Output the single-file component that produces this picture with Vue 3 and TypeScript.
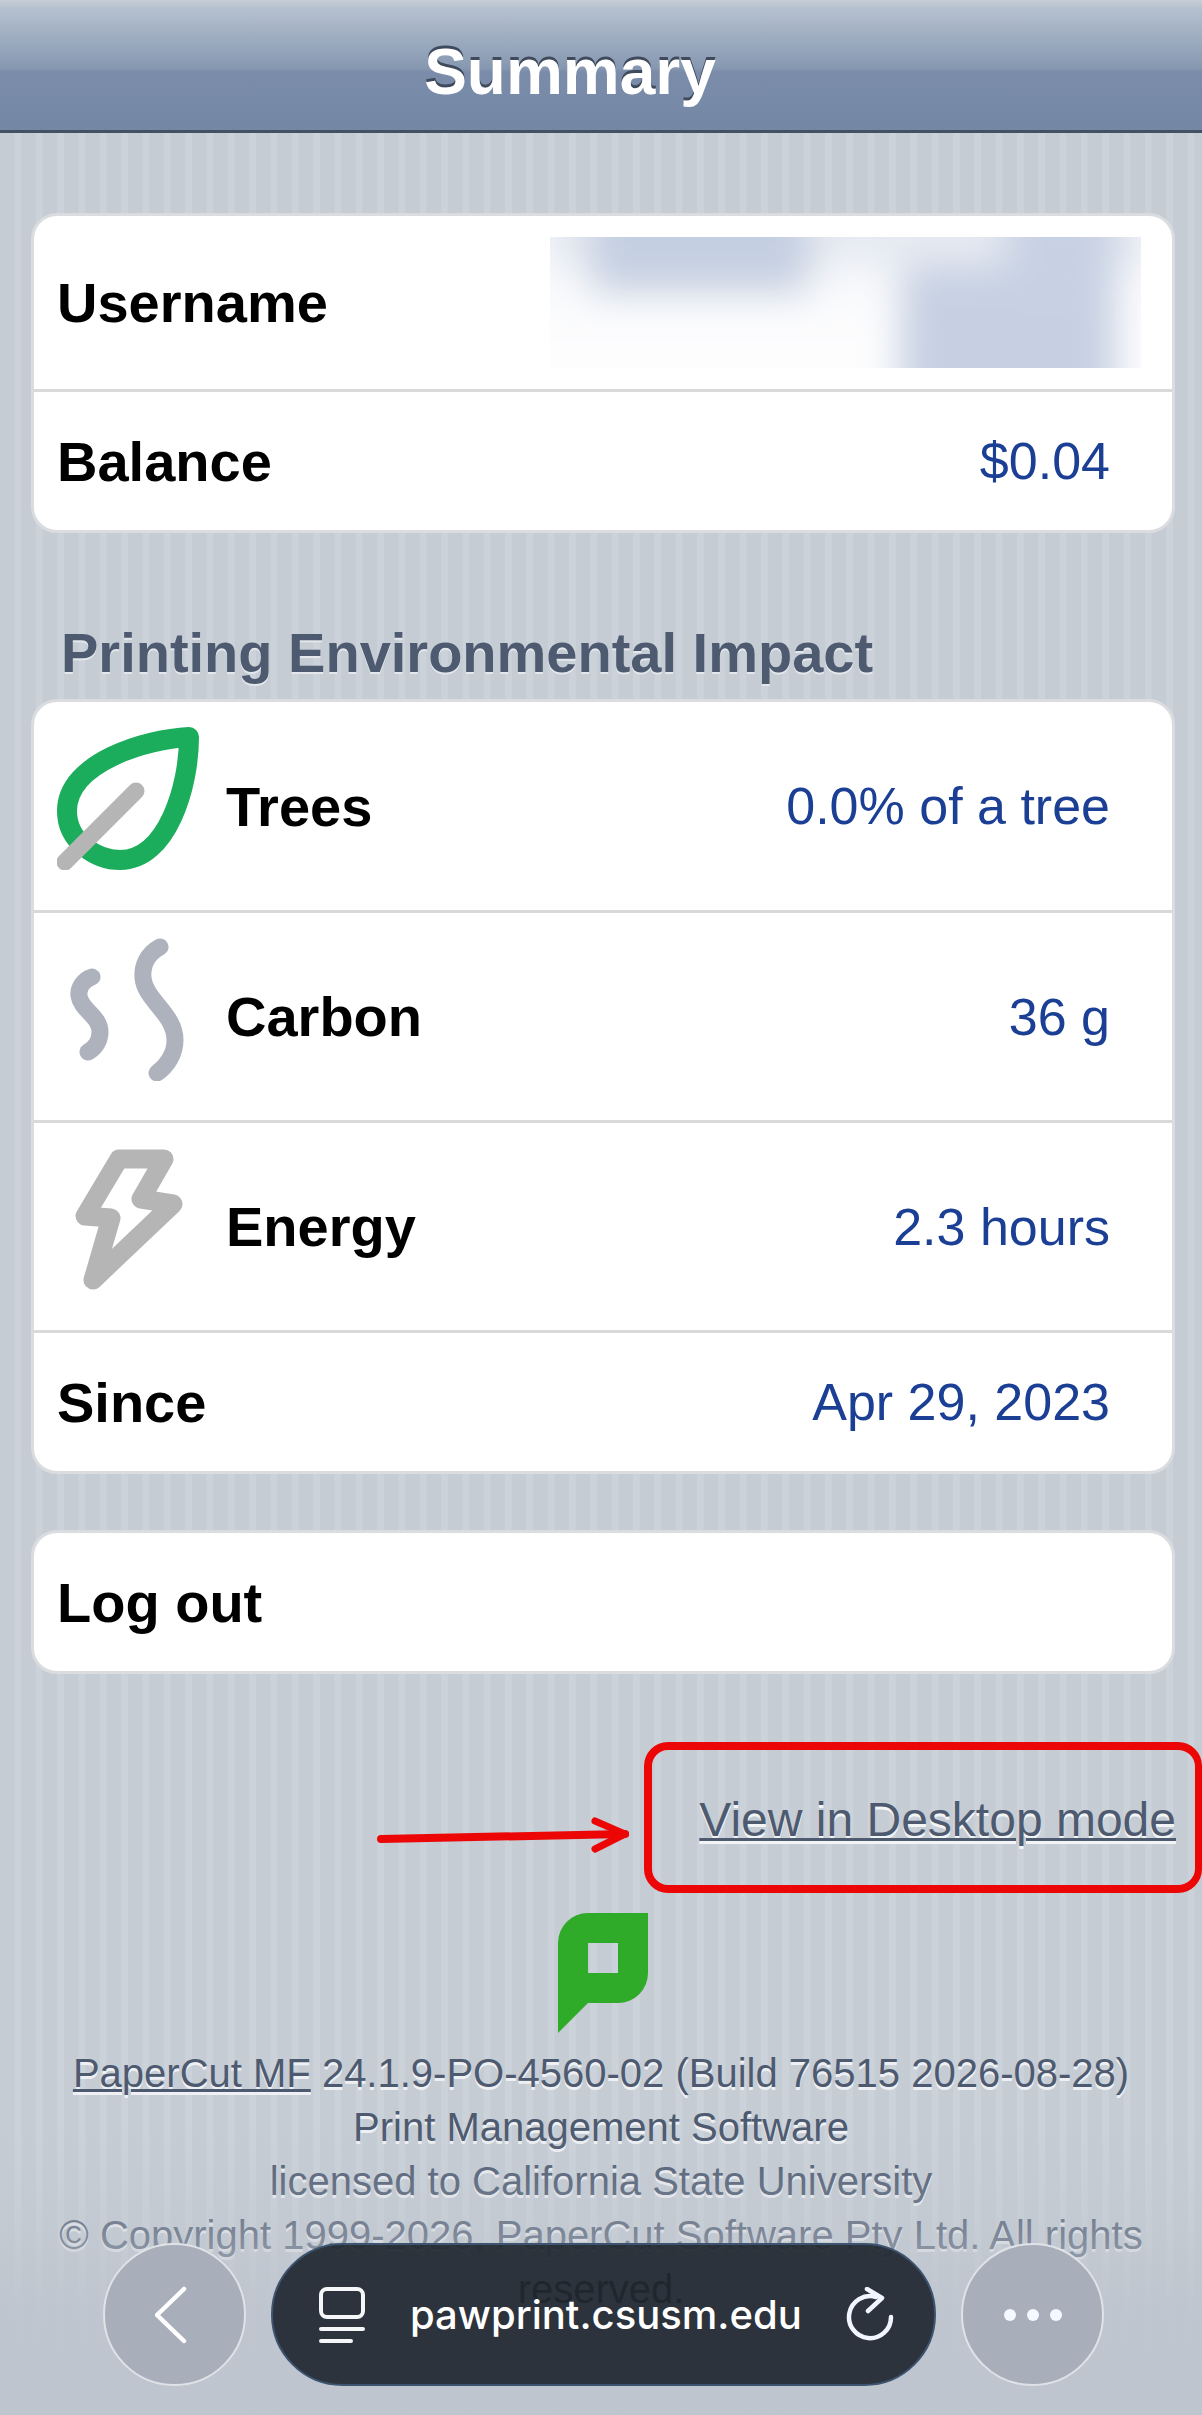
<template>
  <div class="page">
    <header class="topbar">
      <h1 class="title">Summary</h1>
    </header>

    <main class="content">
      <section class="card">
        <div class="row row-user">
          <span class="label">Username</span>
          <svg class="redacted" width="591" height="131" viewBox="0 0 591 131">
            <defs>
              <filter id="smear" filterUnits="userSpaceOnUse" x="-100" y="-100" width="800" height="340">
                <feGaussianBlur stdDeviation="19" />
              </filter>
            </defs>
            <rect width="591" height="131" fill="#fdfdfe" />
            <g filter="url(#smear)">
              <rect x="-10" y="-40" width="610" height="72" fill="#e6eaf2" />
              <rect x="-40" y="40" width="400" height="40" fill="#f9fafc" />
              <rect x="40" y="-40" width="220" height="96" fill="#c4cfe1" />
              <rect x="350" y="30" width="216" height="150" fill="#c6d0e2" />
              <rect x="455" y="-40" width="112" height="104" fill="#c8d1e3" />
            </g>
          </svg>
        </div>
        <div class="row row-short">
          <span class="label">Balance</span>
          <span class="value">$0.04</span>
        </div>
      </section>

      <h2 class="section-title">Printing Environmental Impact</h2>

      <section class="card">
        <div v-for="item in impact" :key="item.label" class="row row-icon">
          <span class="label-wrap">
            <svg v-if="item.icon === 'leaf'" class="icon" viewBox="0 0 142 143">
              <path d="M132 10C90 12 10 35 10 84C10 115 40 133 63 133C110 133 132 60 132 10Z" fill="none" stroke="#1bad5c" stroke-width="20" stroke-linejoin="round" />
              <path d="M79 64L8 135" fill="none" stroke="#b5b5b5" stroke-width="17" stroke-linecap="round" />
            </svg>
            <svg v-else-if="item.icon === 'smoke'" class="icon" viewBox="0 0 142 143">
              <path d="M103 9C90 16 85 28 86 40C88 62 118 76 118 102C118 116 110 128 100 135" fill="none" stroke="#adb2bd" stroke-width="17" stroke-linecap="round" />
              <path d="M35 39C26 42 21 50 22 58C24 72 43 78 43 94C43 103 38 110 31 114" fill="none" stroke="#adb2bd" stroke-width="17" stroke-linecap="round" />
            </svg>
            <svg v-else class="icon" viewBox="0 0 142 143">
              <path d="M62 11L107 11L84 51L116 56L36 132L54 70L28 68Z" fill="none" stroke="#b5b5b5" stroke-width="19" stroke-linejoin="round" />
            </svg>
            <span class="label">{{ item.label }}</span>
          </span>
          <span class="value">{{ item.value }}</span>
        </div>
        <div class="row row-short">
          <span class="label">Since</span>
          <span class="value">Apr 29, 2023</span>
        </div>
      </section>

      <section class="card card-logout">
        <div class="row row-short">
          <span class="label">Log out</span>
        </div>
      </section>
    </main>

    <div class="desktop-row">
      <svg class="arrow" width="252" height="36" viewBox="0 0 252 36">
        <path d="M4 22L248 17" fill="none" stroke="#ec0606" stroke-width="8" stroke-linecap="round" />
        <path d="M218 4L248 17L218 32" fill="none" stroke="#ec0606" stroke-width="7" stroke-linecap="round" stroke-linejoin="miter" />
      </svg>
      <div class="desktop-box">
        <a class="desktop-link">View in Desktop mode</a>
      </div>
    </div>

    <footer class="footer">
      <svg class="logo" width="90" height="120" viewBox="0 0 90 120">
        <path fill-rule="evenodd" fill="#2fab29" d="M30 0H90V60A30 30 0 0 1 60 90H30L0 120V30A30 30 0 0 1 30 0ZM30 30V60H60V30Z" />
      </svg>
      <p class="line"><a class="footer-link">PaperCut MF</a> 24.1.9-PO-4560-02 (Build 76515 2026-08-28)</p>
      <p class="line">Print Management Software</p>
      <p class="line">licensed to California State University</p>
      <p class="line">© Copyright 1999-2026, PaperCut Software Pty Ltd. All rights</p>
      <p class="line line-hidden">reserved.</p>
    </footer>

    <div class="fade"></div>

    <nav class="dock">
      <button class="round-btn">
        <svg width="40" height="60" viewBox="0 0 40 60">
          <path d="M29 4L2 30L29 56" fill="none" stroke="#fff" stroke-width="4.5" stroke-linecap="round" stroke-linejoin="round" />
        </svg>
      </button>
      <div class="url-pill">
        <svg class="tab-icon" width="46" height="56" viewBox="0 0 46 56">
          <rect x="2" y="2" width="42" height="28" rx="6" fill="none" stroke="#f4f6f8" stroke-width="4" />
          <path d="M2 42H44M2 54H32" fill="none" stroke="#f4f6f8" stroke-width="4" stroke-linecap="round" />
        </svg>
        <span class="url">pawprint.csusm.edu</span>
        <svg class="reload" width="48" height="56" viewBox="0 0 48 56">
          <path d="M45 30A21 21 0 1 1 30 10" fill="none" stroke="#f0f5ff" stroke-width="4.5" stroke-linecap="round" />
          <path d="M21 2L36 11L22 24" fill="none" stroke="#f0f5ff" stroke-width="4.5" stroke-linecap="round" stroke-linejoin="round" />
        </svg>
      </div>
      <button class="round-btn">
        <span class="dots"><i></i><i></i><i></i></span>
      </button>
    </nav>
  </div>
</template>

<script setup lang="ts">
interface ImpactItem {
  icon: string;
  label: string;
  value: string;
}

const impact: ImpactItem[] = [
  { icon: 'leaf', label: 'Trees', value: '0.0% of a tree' },
  { icon: 'smoke', label: 'Carbon', value: '36 g' },
  { icon: 'bolt', label: 'Energy', value: '2.3 hours' }
];
</script>

<style scoped>
.page {
  position: relative;
  height: 2415px;
  overflow: hidden;
  font-family: 'Liberation Sans', Arial, sans-serif;
  background-color: #c5ccd4;
  background-image: linear-gradient(90deg, #c5ccd4 70%, #cbd2d9 70%);
  background-size: 21.33px 100%;
}

.topbar {
  height: 133px;
  box-sizing: border-box;
  border-bottom: 3px solid #445165;
  background: linear-gradient(#c8ced6 0, #b6c1d0 8px, #8698b1 68px, #7a8ca9 72px, #7488a6 100%);
  display: flex;
  justify-content: center;
  align-items: center;
  padding: 14px 62px 0 0;
}

.title {
  margin: 0;
  font-size: 64px;
  font-weight: 700;
  color: #fff;
  text-shadow: 0 -3px 0 #3f4a5c;
}

.content {
  padding: 80px 27px 0 31px;
}

.card {
  background: #fff;
  border: 3px solid #dadcdf;
  border-radius: 26px;
  overflow: hidden;
}

.row {
  display: flex;
  justify-content: space-between;
  align-items: center;
  padding: 0 62px 0 23px;
  border-top: 3px solid #d9d9d9;
}

.row:first-child {
  border-top: none;
}

.row-user {
  height: 173px;
  padding-right: 31px;
}

.row-short {
  height: 138px;
}

.row-icon {
  height: 207px;
}

.row-icon:first-child {
  height: 208px;
}

.label-wrap {
  display: flex;
  align-items: center;
  gap: 27px;
}

.label {
  font-size: 56px;
  font-weight: 700;
  color: #000;
}

.value {
  font-size: 52px;
  color: #1b3f94;
}

.icon {
  width: 142px;
  height: 143px;
  margin-top: -15px;
}

.section-title {
  margin: 0;
  height: 166px;
  padding: 90px 0 0 30px;
  box-sizing: border-box;
  font-size: 56px;
  line-height: 60px;
  font-weight: 700;
  color: #4d5a70;
  text-shadow: 0 2px 0 #e4e8ec;
}

.card-logout {
  margin-top: 56px;
}

.desktop-row {
  display: flex;
  justify-content: flex-end;
  align-items: center;
  gap: 15px;
  margin-top: 68px;
}

.arrow {
  margin-top: 34px;
}

.desktop-box {
  width: 558px;
  height: 151px;
  box-sizing: border-box;
  border: 8px solid #ec0606;
  border-right-width: 7px;
  border-radius: 24px;
  display: flex;
  justify-content: flex-end;
  align-items: center;
  padding: 4px 19px 0 0;
}

.desktop-link,
.footer-link {
  text-decoration: underline;
  text-decoration-thickness: 3px;
}

.desktop-link {
  font-size: 48px;
  color: #4d5a70;
  text-shadow: 0 3px 0 #f2f4f6;
}

.footer {
  display: flex;
  flex-direction: column;
  align-items: center;
  margin-top: 20px;
}

.logo {
  margin: 0 0 13px 4px;
}

.line {
  margin: 0;
  font-size: 40px;
  line-height: 54px;
  color: #4d5a70;
  text-shadow: 0 3px 0 #eef0f3;
  white-space: nowrap;
}

.line-hidden {
  position: relative;
  z-index: 2;
  color: #111;
  text-shadow: none;
}

.fade {
  position: absolute;
  left: 0;
  right: 0;
  bottom: 0;
  height: 285px;
  z-index: 1;
  background: linear-gradient(rgba(191, 197, 206, 0) 0%, rgba(191, 197, 206, 0.4) 35%, rgba(191, 197, 206, 0.9) 62%, #bfc5ce 100%);
}

.dock {
  position: absolute;
  left: 103px;
  bottom: 29px;
  z-index: 3;
  display: flex;
  align-items: center;
  gap: 25px;
}

.round-btn {
  width: 143px;
  height: 143px;
  box-sizing: border-box;
  border-radius: 50%;
  border: 2px solid #dfe3e8;
  background: #a8afba;
  padding: 0;
  display: flex;
  justify-content: center;
  align-items: center;
}

.dots {
  display: flex;
  gap: 11px;
}

.dots i {
  width: 12px;
  height: 12px;
  border-radius: 50%;
  background: #f4f8ff;
}

.url-pill {
  width: 665px;
  height: 143px;
  box-sizing: border-box;
  border-radius: 72px;
  border: 2px solid #3d5470;
  background: rgba(32, 40, 48, 0.93);
  display: flex;
  align-items: center;
  padding: 0 0 0 46px;
}

.tab-icon {
  flex: none;
}

.url {
  margin-left: 45px;
  font-family: Inter, 'Liberation Sans', sans-serif;
  font-weight: 500;
  font-size: 40px;
  color: #fff;
  white-space: nowrap;
}

.reload {
  margin-left: 44px;
  flex: none;
}
</style>
